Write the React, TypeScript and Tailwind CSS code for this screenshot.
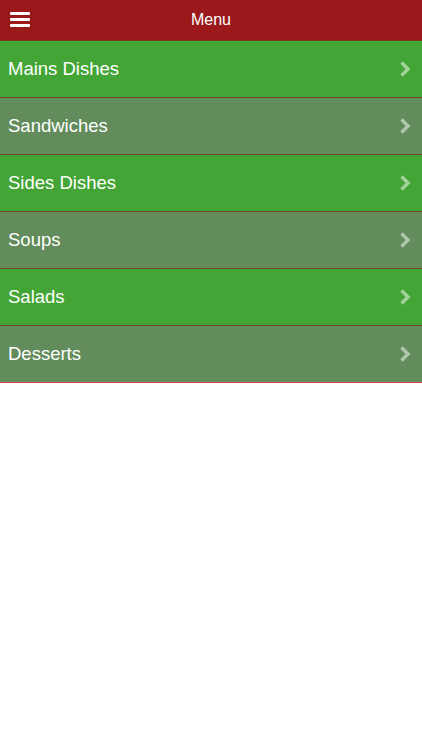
import React from "react";

const items = [
  { label: "Mains Dishes", green: true },
  { label: "Sandwiches", green: false },
  { label: "Sides Dishes", green: true },
  { label: "Soups", green: false },
  { label: "Salads", green: true },
  { label: "Desserts", green: false },
];

function Chevron() {
  return (
    <svg width="14" height="18" viewBox="0 0 14 18" className="shrink-0">
      <path d="M3.5 2.5 L10 9 L3.5 15.5" fill="none" stroke="rgba(255,255,255,0.5)" strokeWidth="3.4" strokeLinecap="butt" strokeLinejoin="miter" />
    </svg>
  );
}

export default function App() {
  return (
    <div className="w-[422px] h-[750px] bg-white" style={{ fontFamily: '"Liberation Sans", Arial, sans-serif' }}>
      <div className="relative h-10 bg-[#9b191b] flex items-center justify-center">
        <div className="absolute left-[10px] top-[12px] flex flex-col gap-[3px]">
          <div className="w-[20px] h-[3px] bg-white rounded-[1px]" />
          <div className="w-[20px] h-[3px] bg-white rounded-[1px]" />
          <div className="w-[20px] h-[3px] bg-white rounded-[1px]" />
        </div>
        <span className="text-white text-[16px]">Menu</span>
      </div>
      <div className="flex flex-col">
        {items.map((it, i) => (
          <div
            key={it.label}
            className={`h-[57px] flex items-center justify-between pl-[8px] pr-[10px] border-t ${i === 0 ? "border-[#7a3a1c]" : "border-[#6a4620]"} ${it.green ? "bg-[#43a535]" : "bg-[#628c5b]"}`}
          >
            <span className="text-white text-[18.5px] leading-none pt-[1px]">{it.label}</span>
            <Chevron />
          </div>
        ))}
        <div className="h-px bg-[#d24a44]" />
      </div>
    </div>
  );
}
